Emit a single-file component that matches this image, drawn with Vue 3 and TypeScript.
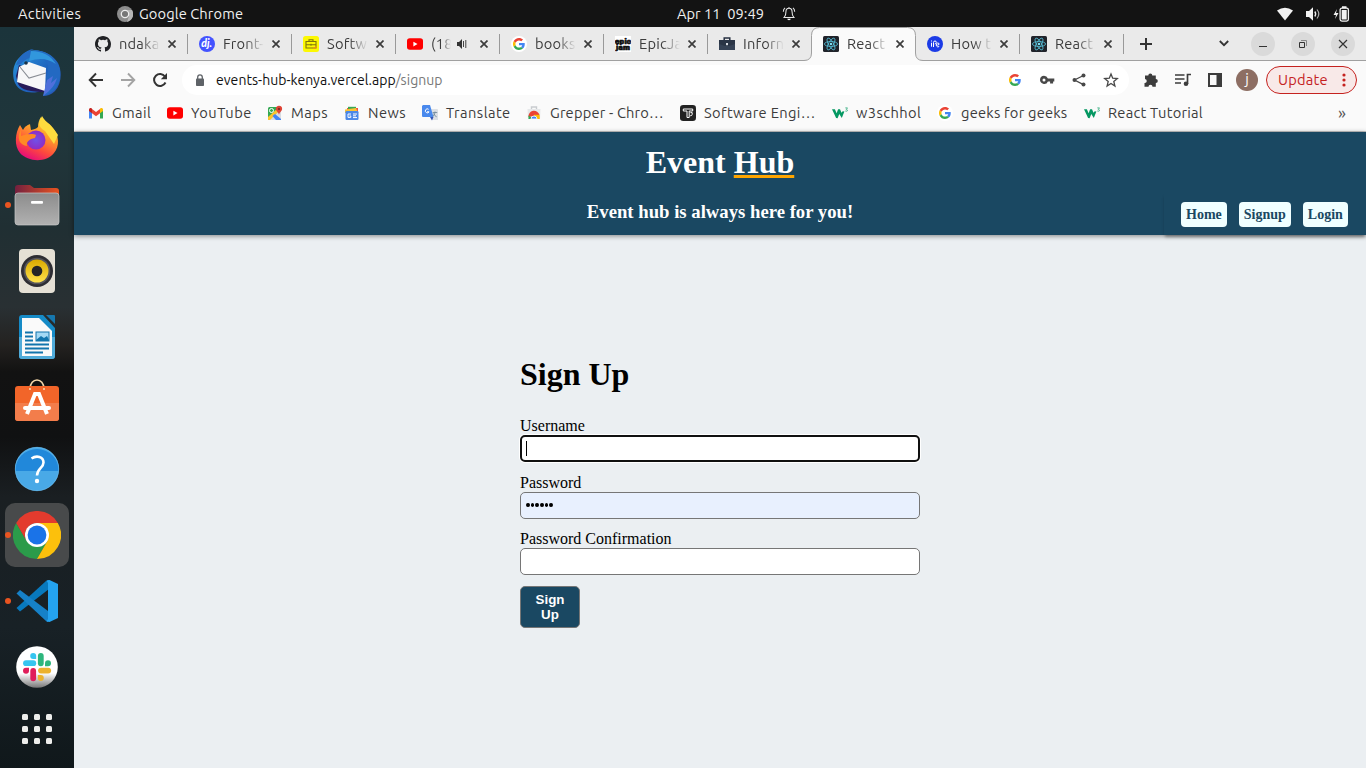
<script setup lang="ts">
interface Tab { icon: string; title: string; active?: boolean; audio?: boolean; sep?: boolean }
interface Bookmark { icon: string; label: string; width: number; spacing: number }

const tabs: Tab[] = [
  { icon: 'github', title: 'ndaka', sep: true },
  { icon: 'dj', title: 'Front-', sep: true },
  { icon: 'case-yellow', title: 'Softw', sep: true },
  { icon: 'youtube', title: '(18', audio: true, sep: true },
  { icon: 'google-round', title: 'books', sep: true },
  { icon: 'epic', title: 'EpicJa', sep: true },
  { icon: 'case-dark', title: 'Inforn' },
  { icon: 'react', title: 'React', active: true },
  { icon: 'howto', title: 'How t', sep: true },
  { icon: 'react', title: 'React', sep: true },
]

const bookmarks: Bookmark[] = [
  { icon: 'gmail', label: 'Gmail', width: 79, spacing: 0.36 },
  { icon: 'youtube', label: 'YouTube', width: 100, spacing: 0.45 },
  { icon: 'maps', label: 'Maps', width: 77, spacing: 0.5 },
  { icon: 'news', label: 'News', width: 78, spacing: 0.45 },
  { icon: 'translate', label: 'Translate', width: 104, spacing: 0.44 },
  { icon: 'store', label: 'Grepper - Chro…', width: 154, spacing: 0.18 },
  { icon: 'tk', label: 'Software Engi…', width: 152, spacing: 0.36 },
  { icon: 'w3', label: 'w3schhol', width: 105, spacing: 0.42 },
  { icon: 'google-round', label: 'geeks for geeks', width: 147, spacing: 0.22 },
  { icon: 'w3', label: 'React Tutorial', width: 130, spacing: 0.24 },
]

const dock = [
  { icon: 'thunderbird' }, { icon: 'firefox' }, { icon: 'files', running: true },
  { icon: 'rhythmbox' }, { icon: 'writer' }, { icon: 'software' }, { icon: 'help' },
  { icon: 'chrome', running: true, focused: true }, { icon: 'vscode', running: true }, { icon: 'slack' },
]
</script>

<template>
  <div class="desktop">
    <svg class="defs" width="0" height="0">
      <defs>
        <linearGradient id="tbBlue" x1="0" y1="0" x2="1" y2="1"><stop offset="0" stop-color="#2a9be0" /><stop offset=".55" stop-color="#1f63bd" /><stop offset="1" stop-color="#2b55b5" /></linearGradient>
        <linearGradient id="ffBody" x1=".8" y1="0" x2=".3" y2="1"><stop offset="0" stop-color="#fff14a" /><stop offset=".35" stop-color="#ffa52a" /><stop offset=".7" stop-color="#ff4a3c" /><stop offset="1" stop-color="#e3087e" /></linearGradient>
        <radialGradient id="ffCore"><stop offset="0" stop-color="#6f52e8" /><stop offset="1" stop-color="#8f2dc4" /></radialGradient>
        <linearGradient id="folderBack" x1="0" x2="1"><stop offset="0" stop-color="#73203f" /><stop offset="1" stop-color="#e95420" /></linearGradient>
        <linearGradient id="folderFront" x1="0" y1="0" x2="0" y2="1"><stop offset="0" stop-color="#8c8c8c" /><stop offset="1" stop-color="#b1b1b1" /></linearGradient>
        <linearGradient id="yellowCone" x1="0" y1="0" x2="0" y2="1"><stop offset="0" stop-color="#d9a900" /><stop offset="1" stop-color="#ffe14b" /></linearGradient>
        <linearGradient id="slackBg" x1="0" y1="0" x2="0" y2="1"><stop offset=".65" stop-color="#fff" /><stop offset="1" stop-color="#777" /></linearGradient>

        <symbol id="i-github" viewBox="0 0 16 16"><path fill="#202124" d="M8 0C3.58 0 0 3.58 0 8c0 3.54 2.29 6.53 5.47 7.59.4.07.55-.17.55-.38v-1.49c-2.01.37-2.53-.49-2.69-.94-.09-.23-.48-.94-.82-1.13-.28-.15-.68-.52-.01-.53.63-.01 1.08.58 1.23.82.72 1.21 1.87.87 2.33.66.07-.52.28-.87.51-1.07-1.78-.2-3.64-.89-3.64-3.95 0-.87.31-1.59.82-2.15-.08-.2-.36-1.02.08-2.12 0 0 .67-.21 2.2.82a7.6 7.6 0 0 1 4 0c1.53-1.04 2.2-.82 2.2-.82.44 1.1.16 1.92.08 2.12.51.56.82 1.27.82 2.15 0 3.07-1.87 3.75-3.65 3.95.29.25.54.73.54 1.48v2.2c0 .21.15.46.55.38A8 8 0 0 0 16 8c0-4.42-3.58-8-8-8z" /></symbol>
        <symbol id="i-dj" viewBox="0 0 16 16"><circle cx="8" cy="8" r="8" fill="#4353ff" /><text x="2.2" y="11.3" font-family="Lato" font-size="10.500" font-weight="900" font-style="italic" fill="#fff">dj.</text></symbol>
        <symbol id="i-case-yellow" viewBox="0 0 16 16"><rect width="16" height="16" rx="2.5" fill="#fcf803" /><path d="M3 5.5h10V12H3zM6 5.5V3.7h4v1.8M3 8.8h10M8 7.7v2" fill="none" stroke="#80740c" stroke-width="1.1" /><path d="M13 10v2h-3" stroke="#ff8b20" fill="none" /></symbol>
        <symbol id="i-youtube" viewBox="0 0 16 16"><rect y="2.3" width="16" height="11.5" rx="2.8" fill="#f00" /><path d="M6.4 5.7v4.7L10.5 8z" fill="#fff" /></symbol>
        <symbol id="i-google" viewBox="0 0 48 48"><path fill="#EA4335" d="M24 9.5c3.54 0 6.71 1.22 9.21 3.6l6.85-6.85C35.9 2.38 30.47 0 24 0 14.62 0 6.51 5.38 2.56 13.22l7.98 6.19C12.43 13.72 17.74 9.5 24 9.5z" /><path fill="#4285F4" d="M46.98 24.55c0-1.57-.15-3.09-.38-4.55H24v9.02h12.94c-.58 2.96-2.26 5.48-4.78 7.18l7.73 6c4.51-4.18 7.09-10.36 7.09-17.65z" /><path fill="#FBBC05" d="M10.53 28.59a14.5 14.5 0 0 1 0-9.18l-7.98-6.19a24 24 0 0 0 0 21.56z" /><path fill="#34A853" d="M24 48c6.48 0 11.93-2.13 15.89-5.81l-7.73-6c-2.15 1.45-4.92 2.3-8.16 2.3-6.26 0-11.57-4.22-13.47-9.91l-7.98 6.19C6.51 42.62 14.62 48 24 48z" /></symbol>
        <symbol id="i-google-round" viewBox="0 0 16 16"><circle cx="8" cy="8" r="8" fill="#fff" /><use href="#i-google" x="2" y="2" width="12" height="12" /></symbol>
        <symbol id="i-epic" viewBox="0 0 16 16"><rect width="16" height="16" fill="#fff" /><g font-family="Roboto" font-weight="900" font-size="8" fill="#111" stroke="#111" stroke-width=".7"><text x="0" y="7.500" textLength="16">epic</text><text x="1" y="13.500" textLength="14">jam</text></g></symbol>
        <symbol id="i-case-dark" viewBox="0 0 16 16"><path d="M5.2 4V2.1h5.6V4" fill="none" stroke="#273142" stroke-width="1.5" /><path d="M0 4h16v10H0z" fill="#354255" /><path d="M0 4h16v4L10 10H6L0 8z" fill="#2a3546" /><rect x="7" y="7" width="2" height="2.200" fill="#d7dce2" /></symbol>
        <symbol id="i-react" viewBox="0 0 16 16"><rect width="16" height="16" rx="1.5" fill="#20232a" /><g fill="none" stroke="#54b9d1" stroke-width=".85"><ellipse cx="8" cy="8" rx="6.6" ry="2.5" /><ellipse cx="8" cy="8" rx="6.6" ry="2.5" transform="rotate(60 8 8)" /><ellipse cx="8" cy="8" rx="6.6" ry="2.5" transform="rotate(120 8 8)" /></g><circle cx="8" cy="8" r="1.3" fill="#7bdcf0" /></symbol>
        <symbol id="i-howto" viewBox="0 0 16 16"><circle cx="8" cy="8" r="8" fill="#1b3be6" /><path d="M4.500 4.500v1M4.500 6.700v4M6.500 11V6.500Q6.500 5 8 5t1.300 1.400T7.800 8M9.300 10q-.4-3 1.400-3t1.300 1.500l-1.800.8M9.600 10.200q1 1.300 2.600.3" fill="none" stroke="#fff" stroke-width="1" /></symbol>
        <symbol id="i-gmail" viewBox="0 0 16 16"><path d="M1 4v9.5h3V7.2z" fill="#4285f4" /><path d="M12 7.2v6.3h3V4z" fill="#34a853" /><path d="M4 4v4.3l4 3 4-3V4L8 7z" fill="#ea4335" /><path d="M1 5c0-2 1.8-2.5 3-1.4v4.7L1 6z" fill="#c5221f" /><path d="M15 5c0-2-1.8-2.5-3-1.4v4.7L15 6z" fill="#fbbc04" /></symbol>
        <symbol id="i-maps" viewBox="0 0 16 16"><rect x="1" y="2" width="13" height="13" rx="1.5" fill="#34a853" /><path d="M2 15 14 4v11z" fill="#d8dce1" /><path d="M1 12 11 3l2 2L3 15H1z" fill="#fbc52d" /><path d="M8 9l6 5v1H9L5.5 11z" fill="#4285f4" /><circle cx="4.5" cy="5.5" r="2" fill="none" stroke="#fff" /><path d="M12 .7a3.2 3.2 0 0 1 3.1 3.5C15 6 12.5 7 12 9.7 11.5 7 9 6 8.8 4.2A3.2 3.2 0 0 1 12 .7z" fill="#df4335" /><circle cx="12" cy="4" r="1.1" fill="#75251c" /></symbol>
        <symbol id="i-news" viewBox="0 0 16 16"><path d="M3 3h11v7H3z" fill="#ef5143" /><path d="M4 1.8h8v8H4z" fill="#39a852" /><path d="M1 4.5 12 3l2 5H1z" fill="#fbc234" /><rect x="1.5" y="6" width="13" height="9" rx="1.2" fill="#4b88e8" /><path d="M7 9H4v3.4h2.8v-1.5H5.5M9 9h4M9 10.8h3M9 12.6h4" fill="none" stroke="#fff" stroke-width="1" /></symbol>
        <symbol id="i-translate" viewBox="0 0 16 16"><path d="M5 4h10a1 1 0 0 1 1 1v10H10z" fill="#dce0e5" /><path d="M1 0h7l3.5 12H1a1 1 0 0 1-1-1V1z" fill="#4989ed" /><path d="M8 12h3.5L10 15.5z" fill="#3454b4" /><path d="M6.6 4.3a2 2 0 1 0 .5 2.5H5" fill="none" stroke="#fff" /><path d="M10.7 7.5h4.5M13 6.5v1q-.4 3-2.5 4M11.5 8.5q1.5 3 3.2 3.3" fill="none" stroke="#688397" stroke-width=".8" /></symbol>
        <symbol id="i-store" viewBox="0 0 16 16"><path d="M5.5 4V2h5v2" fill="none" stroke="#c9cccf" stroke-width="1.4" /><path d="M1.5 4h13l-.5 10H2z" fill="#e6e8ea" /><path d="M2.500 12a5.600 5.600 0 0 1 11-2z" fill="#ea4335" /><path d="M2.500 14v-3.500L8 14z" fill="#34a853" /><path d="M8 9.800h5.700V14H8z" fill="#fbbc05" /><path d="M5 14a3 3 0 1 1 6 0z" fill="#4285f4" stroke="#fff" stroke-width=".8" /></symbol>
        <symbol id="i-tk" viewBox="0 0 16 16"><rect width="16" height="16" rx="3.2" fill="#222" /><path d="M3.3 6V4h9.4v2H9.2v6.5H7V6zM10.4 7.6h1.8v1.7q0 1.5-2 1.5" fill="none" stroke="#fff" stroke-width="1" /></symbol>
        <symbol id="i-w3" viewBox="0 0 16 16"><path d="M0 4.300h2.900l1.700 4 1.500-4h1.900l1.500 3.400 1.200-1.400 1.700.2-2.600 6.500L7.300 9l-1.700 4.200L4.100 13z" fill="#059862" /><path d="M13.300 2.900h2.200l-1.200 1.500q1.600.3 1 1.500-.8.700-2 .1" fill="none" stroke="#2aa878" stroke-width=".8" /></symbol>

        <symbol id="i-thunderbird" viewBox="0 0 48 48"><path d="M16 2C26-1 39 4 45 14c4 8 4 20-3 28-4 4-8 5-12 5 2-2 2-4 1-5C17 45 7 44 2 34-1 27-1 15 7 8c3-3 6-5 9-6z" fill="url(#tbBlue)" /><path d="M3 27 6 16 30 24l2 19C18 43 8 41 5 35z" fill="#281b59" /><path d="M4 33 6 18l10-5 17 6-1 23z" fill="#f7f7f8" /><path d="m7 18 9 11 17-5" fill="none" stroke="#898d94" stroke-width="1.1" /><path d="M8 15C16 5 32 7 35 16c1 8-3 12-1 15 0 6 0 9-4 16 14-4 18-14 17-26C45 8 30-1 17 2l4-2C12 1 6 7 3 16z" fill="#2369c2" /><path d="M18 2c12 0 20 5 25 13-9-6-17-6-27-3z" fill="#3197dd" /><path d="m34 31 6-4-2 7 6-5c-2 7-6 12-14 18z" fill="#4f70db" /><circle cx="13" cy="14" r="1.8" fill="#1b3348" /></symbol>
        <symbol id="i-firefox" viewBox="0 2 48 48"><path d="M28 4c2 4 8 5 12 11 6 8 7 18 1 25-8 10-26 9-34 0C1 33 2 20 7 12l3 5c2-4 5-5 7-6l1 6c3-1 5-1 7-3 0-4 1-7 3-10z" fill="url(#ffBody)" /><path d="M29 3c-3 7-5 10 3 15l9 13 4-9C40 13 33 10 29 3z" fill="#ffdc3e" /><circle cx="23" cy="27" r="9.5" fill="url(#ffCore)" /><path d="M8 23c5-2 12-3 15-1l-1 3c-6 1-9 4-8 8-7-1-9-6-8-12l2-4z" fill="#ff8a25" /></symbol>
        <symbol id="i-files" viewBox="0 0 48 48"><path d="M2 25V7q0-3 3-3h12l4 3h22q3 0 3 3v15z" fill="url(#folderBack)" /><rect x="2" y="12" width="44" height="32" rx="3" fill="url(#folderFront)" stroke="#c9c9c9" stroke-width=".7" /><rect x="18" y="20" width="12" height="2.8" rx="1" fill="#fff" /></symbol>
        <symbol id="i-rhythmbox" viewBox="0 0 48 48"><rect x="6" y="2" width="36" height="44" rx="4" fill="#e5e0d5" /><circle cx="24" cy="24" r="16" fill="#2e2d33" /><circle cx="24" cy="24" r="13.3" fill="#55545a" /><circle cx="24" cy="24" r="11.5" fill="url(#yellowCone)" /><circle cx="24" cy="24" r="5.3" fill="#252527" /></symbol>
        <symbol id="i-writer" viewBox="0 0 48 48"><path d="M9 2h21l12 13v28q0 3-3 3H9q-3 0-3-3V5q0-3 3-3z" fill="#168bc7" /><path d="M6 24h36v19q0 3-3 3H9q-3 0-3-3z" fill="#50abd9" /><path d="M9 5h17l13 13v25H9z" fill="#fafafa" /><path d="M33 2h8q1 0 1 1v8z" fill="#1677ae" /><path d="M12 19.500h8M12 23.500h8M12 27.500h8M12 31.500h24M12 35.500h24M12 39.500h18" stroke="#1275ad" stroke-width="2" /><rect x="23" y="19" width="13" height="9" fill="#a4d9f5" stroke="#1275ad" /><path d="m23 27 5-4 3 2 3-2 2 4v1H23z" fill="#1275ad" /></symbol>
        <symbol id="i-software" viewBox="0 3 48 48"><path d="M17 15v-2C17 1 31 1 31 13v2" fill="none" stroke="#f5d8aa" stroke-width="1.6" /><rect x="2" y="10" width="44" height="35" rx="3" fill="#f26529" /><path d="M2 27h44v15q0 3-3 3H5q-3 0-3-3z" fill="#f37d4b" /><path d="m14 38 8-20h4l8 20" fill="none" stroke="#fff" stroke-width="4" /><rect x="10" y="30" width="28" height="4" rx="2" fill="#fff" /><path d="M17 14v-2M31 14v-2" stroke="#f5d8aa" stroke-width="1.6" /></symbol>
        <symbol id="i-help" viewBox="0 0 48 48"><circle cx="24" cy="24" r="22" fill="#49a9e7" /><path d="M2 26a22 22 0 1 1 44 0z" fill="#2188da" /><circle cx="24" cy="24" r="21.7" fill="none" stroke="#6cbcec" stroke-width=".6" /><path d="M18.500 13.500c5-3.500 12-2 12 4 0 5.500-6.500 6-6.500 13" fill="none" stroke="#fff" stroke-width="2.600" /><circle cx="24" cy="36" r="2.200" fill="#fff" /></symbol>
        <symbol id="i-chrome" viewBox="0 0 48 48"><path d="M24 24 13.600 30 3.200 12A24 24 0 0 0 24 48l10.400-18z" fill="#2b9b4a" /><path d="M24 12h20.800A24 24 0 0 1 24 48l10.400-18z" fill="#fcc00c" /><path d="M3.200 12A24 24 0 0 1 44.800 12H24a12 12 0 0 0-10.400 18z" fill="#e33b2e" /><circle cx="24" cy="24" r="12" fill="#fff" /><circle cx="24" cy="24" r="9.400" fill="#1a73e8" /></symbol>
        <symbol id="i-vscode" viewBox="0 0 48 48"><path d="M3.500 31 7 34.500 36 12V3L33 4 3.500 31z" fill="#0879bd" /><path d="m7 13-3.500 3.500L33 44l2 1V34z" fill="#1681c8" /><path d="m33.500 3.500 3-.5L45 7v34l-8.500 4-3-.5L35 42V6z" fill="#24a3f0" /></symbol>
        <symbol id="i-slack" viewBox="0 0 48 48"><circle cx="24" cy="24" r="20.800" fill="url(#slackBg)" /><g stroke-width="5.800" stroke-linecap="round"><path d="M13 20.200h7.300" stroke="#36c5f0" /><path d="M27.800 13v7.300" stroke="#2eb67d" /><path d="M28 27.600h7.200" stroke="#ecb22e" /><path d="M20.200 28v7.300" stroke="#e01e5a" /></g><path d="M20.200 10a3 3 0 0 1 3 3v3h-3a3 3 0 0 1 0-6z" fill="#36c5f0" /><path d="M38 20.200a3 3 0 0 1-3 3h-3v-3a3 3 0 0 1 6 0z" fill="#2eb67d" /><path d="M27.800 38a3 3 0 0 1-3-3v-3h3a3 3 0 0 1 0 6z" fill="#ecb22e" /><path d="M10 27.700a3 3 0 0 1 3-3h3v3a3 3 0 0 1-6 0z" fill="#e01e5a" /></symbol>
      </defs>
    </svg>

    <header class="topbar">
      <span class="activities">Activities</span>
      <svg class="app-logo" viewBox="0 0 16 16"><circle cx="8" cy="8" r="8" fill="#8d8d8d" /><path d="M8 4h7a8 8 0 0 1-5 12l2-6z" fill="#b5b5b5" /><circle cx="8" cy="8" r="3.700" fill="#777" stroke="#eee" stroke-width="1.300" /></svg>
      <span class="app-name">Google Chrome</span>
      <span class="clock">Apr 11&nbsp; 09:49</span>
      <svg class="bell" viewBox="0 0 16 18"><path d="M2.500 13.500h11c-1.500-1.500-2-3-2-6.500 0-2.500-1.500-4-3.500-4S4.500 4.500 4.500 7c0 3.500-.5 5-2 6.500zM8 3V1.500M3.500 2.500Q1.500 4 1.500 7M12.500 2.500q2 1.500 2 4.500" fill="none" stroke="#e8e8e8" stroke-width="1.200" /><path d="M6 15h4a2 1.600 0 0 1-4 0z" fill="#fff" /></svg>
      <div class="status">
        <svg width="16" height="14" viewBox="0 0 16 14"><path d="M0 3.500Q8-2 16 3.500L8 13.500z" fill="#f2f2f2" /></svg>
        <svg width="16" height="16" viewBox="0 0 16 16"><path d="M1 5h3l4-3.800v13.600L4 11H1z" fill="#f2f2f2" /><path d="M9.800 5.500q1.800 2.500 0 5" fill="none" stroke="#f2f2f2" stroke-width="1.300" /><path d="M12 3.500q3.600 4.500 0 9" fill="none" stroke="#aaa" stroke-width="1.200" /></svg>
        <svg width="17" height="16" viewBox="0 0 17 16"><path d="M4 3 .5 9H3l-1 4 3.500-6H3z" fill="#f2f2f2" /><rect x="7.100" y="2.100" width="8.300" height="13" rx="1.800" fill="none" stroke="#f2f2f2" stroke-width="1.300" /><path d="M9 .3h4.500v2H9zM8.700 4h5v9.500h-5z" fill="#f2f2f2" /></svg>
      </div>
    </header>

    <div class="workspace">
      <aside class="dock">
        <div v-for="d in dock" :key="d.icon" class="tile" :class="{ focused: d.focused }">
          <svg width="48" height="48"><use :href="'#i-' + d.icon" /></svg>
          <i v-if="d.running" class="dot"></i>
        </div>
        <div class="apps"><i v-for="n in 9" :key="n"></i></div>
      </aside>

      <section class="browser">
        <div class="tabstrip">
          <div v-for="(t, i) in tabs" :key="i" class="tab" :class="{ active: t.active, sep: t.sep }">
            <svg v-if="t.active" class="shape" width="122" height="34" viewBox="0 0 122 34"><path d="M0 33.500h1q7.500 0 7.500-7.500V8.500Q8.500.5 16.500.5h88q8 0 8 8V26q0 7.500 7.500 7.500h2v.5H0z" fill="#fafafa" /><path d="M0 33.500h1q7.500 0 7.500-7.500V8.500Q8.500.5 16.500.5h88q8 0 8 8V26q0 7.500 7.500 7.500h2" fill="none" stroke="#a0a0a0" /></svg>
            <svg class="fav" width="16" height="16"><use :href="'#i-' + t.icon" /></svg>
            <span class="title" :class="{ short: t.audio }">{{ t.title }}</span>
            <svg v-if="t.audio" class="audio" width="11" height="10" viewBox="0 0 11 10"><path d="M0 3h2l3-3v10L2 7H0z" fill="#333" /><path d="M6.500 2v6M8.800 1v8" stroke="#444" /></svg>
            <svg class="close" width="8" height="8" viewBox="0 0 8 8"><path d="m.5.5 7 7m0-7-7 7" stroke="#3c3c3c" stroke-width="1.700" /></svg>
          </div>
          <svg class="plus" width="12" height="12" viewBox="0 0 12 12"><path d="M6 0v12M0 6h12" stroke="#333" stroke-width="2" /></svg>
          <svg class="chev" width="10" height="7" viewBox="0 0 10 7"><path d="m.8 1 4.200 4.200L9.200 1" fill="none" stroke="#333" stroke-width="1.800" /></svg>
          <div class="winctl">
            <span><svg width="10" height="10"><path d="M1 7.500h8" stroke="#333" /></svg></span>
            <span><svg width="10" height="10"><path d="M1.500 3.500h5v5h-5z" fill="none" stroke="#333" /><path d="M3 1.500h5.500V7" fill="none" stroke="#888" /></svg></span>
            <span><svg width="10" height="10"><path d="m1 1 8 8m0-8L1 9" stroke="#333" stroke-width="1.200" /></svg></span>
          </div>
        </div>

        <div class="toolbar">
          <div class="nav-icons">
            <svg viewBox="0 0 16 16"><path d="M15 8H2M8 1.500 1.700 8 8 14.500" fill="none" stroke="#333" stroke-width="1.900" /></svg>
            <svg viewBox="0 0 16 16"><path d="M1 8h13M8 1.500 14.300 8 8 14.500" fill="none" stroke="#a3a3a3" stroke-width="1.900" /></svg>
            <svg viewBox="0 0 16 16"><path d="M13.500 10.500A6 6 0 1 1 13 4.500" fill="none" stroke="#333" stroke-width="2" /><path d="M15 1v6.200H8.800z" fill="#333" /></svg>
          </div>
          <div class="omnibox">
            <svg class="lock" width="10" height="12" viewBox="0 0 10 12"><rect x="1" y="4.500" width="8" height="7.500" rx=".8" fill="#5f6368" /><path d="M2.700 5V3.200a2.300 2.300 0 0 1 4.600 0V5" fill="none" stroke="#5f6368" stroke-width="1.300" /></svg>
            <span class="url">events-hub-kenya.vercel.app<em>/signup</em></span>
            <div class="omni-icons">
              <svg viewBox="-2 -2 16 16"><use href="#i-google" width="12" height="12" /></svg>
              <svg viewBox="0 0 16 16"><path fill-rule="evenodd" d="M5 3.700a4.200 4.200 0 0 1 3.900 2.700h6.400v3h-1.200v2.100h-3V9.400H8.900A4.100 4.100 0 1 1 5 3.700zm0 2.700a1.500 1.500 0 1 0 0 3 1.500 1.500 0 0 0 0-3z" fill="#484848" /></svg>
              <svg viewBox="0 0 16 16"><path d="m12.500 3.500-9 4.500 9 4.700" fill="none" stroke="#484848" stroke-width="1.300" /><g fill="#484848"><circle cx="12.500" cy="3.500" r="2" /><circle cx="3.500" cy="8" r="2" /><circle cx="12.500" cy="12.600" r="2" /></g></svg>
              <svg viewBox="0 0 16 16"><path d="m8 1.900 1.700 4.300 4.600.3-3.500 3 1.100 4.500L8 11.500 4.100 14l1.100-4.500-3.500-3 4.600-.3z" fill="none" stroke="#484848" stroke-width="1.300" /></svg>
            </div>
          </div>
          <div class="ext-icons">
            <svg viewBox="0 0 16 16"><path d="M2 3.500h3.300a2 2 0 1 1 4 0h3.500V7a2 2 0 1 1 0 4v3.700H9.500a2 2 0 0 0-4 0H1.500V11a2 2 0 0 0 .5-4z" fill="#3c3c3c" /></svg>
            <svg viewBox="0 0 16 16"><path d="M0 3h9.500M0 7h9.500M0 11h6M12.500 12V2.500H16" fill="none" stroke="#3c3c3c" stroke-width="1.700" /><circle cx="11" cy="11.800" r="2.300" fill="#3c3c3c" /></svg>
            <svg viewBox="0 0 16 16"><path d="M1 1h14v14H1zM3 3v10h6.500V3z" fill-rule="evenodd" fill="#3c3c3c" /></svg>
          </div>
          <span class="avatar">j</span>
          <div class="update">Update<svg width="4" height="14"><g fill="#c5221f"><circle cx="2" cy="2" r="1.600" /><circle cx="2" cy="7" r="1.600" /><circle cx="2" cy="12" r="1.600" /></g></svg></div>
        </div>

        <div class="bookmarks">
          <div v-for="b in bookmarks" :key="b.label" class="bm" :style="{ width: b.width + 'px', letterSpacing: b.spacing + 'px' }">
            <svg width="16" height="16"><use :href="'#i-' + b.icon" /></svg><span>{{ b.label }}</span>
          </div>
          <span class="more">»</span>
        </div>

        <main class="page">
          <div class="hero">
            <h1>Event <span>Hub</span></h1>
            <h3>Event hub is always here for you!</h3>
            <nav><a>Home</a><a>Signup</a><a>Login</a></nav>
          </div>
          <form class="signup" @submit.prevent>
            <h1>Sign Up</h1>
            <label>Username</label>
            <div class="field focus"><i class="caret"></i></div>
            <label>Password</label>
            <div class="field filled"><b v-for="n in 6" :key="n"></b></div>
            <label>Password Confirmation</label>
            <div class="field last"></div>
            <button type="submit">Sign Up</button>
          </form>
        </main>
      </section>
    </div>
  </div>
</template>

<style>
html, body { margin: 0; overflow: hidden; }
</style>

<style scoped>
* { box-sizing: border-box; }
svg { display: block; flex: none; }
.desktop { width: 1366px; height: 768px; overflow: hidden; font-family: Ubuntu, "Noto Sans", sans-serif; font-size: 14.67px; display: flex; flex-direction: column; }
.defs { position: absolute; }
.topbar { height: 27px; flex: none; background: #131313; color: #f0f0f0; display: flex; align-items: center; padding-left: 18px; }
.topbar span { white-space: nowrap; line-height: 26px; }
.activities { width: 99px; letter-spacing: .3px; }
.app-logo { width: 16px; height: 16px; margin-right: 6px; }
.app-name { width: 538px; letter-spacing: .1px; }
.clock { width: 105px; }
.bell { width: 14px; height: 17px; }
.status { margin-left: auto; display: flex; gap: 12px; align-items: center; padding-right: 16px; }

.workspace { display: flex; height: 741px; }
.dock { width: 74px; flex: none; padding-top: 14px; display: flex; flex-direction: column; align-items: center; gap: 2px; background: linear-gradient(#1b343b 0, #20363b 120px, #202f33 200px, #293033 280px, #242220 318px, #121212 345px, #101112 410px, #1a1f22 470px, #182126 600px, #10181b 741px); }
.tile { width: 64px; height: 64px; border-radius: 10px; display: flex; align-items: center; justify-content: center; position: relative; }
.tile.focused { background: #484a4b; }
.dot { position: absolute; left: 0; top: 29px; width: 6px; height: 6px; border-radius: 50%; background: #e95420; }
.apps { height: 56px; display: grid; grid-template-columns: repeat(3, 6px); grid-auto-rows: 6px; gap: 6px; align-content: center; }
.apps i { background: #eeeeec; border-radius: 1.5px; }

.browser { width: 1292px; display: flex; flex-direction: column; background: #fafafa; }
.tabstrip { height: 34px; flex: none; background: #eaeaea; border-bottom: 1px solid #a0a0a0; display: flex; align-items: center; padding-left: 10px; }
.tab { width: 104px; height: 34px; flex: none; padding-left: 11px; display: flex; align-items: center; position: relative; }
.tab.sep::after { content: ""; position: absolute; right: 0; top: 7px; width: 1px; height: 20px; background: #999; }
.shape { position: absolute; left: -9px; top: 0; }
.fav { position: relative; margin-right: 8px; }
.title { position: relative; width: 41px; white-space: nowrap; color: #3c3c3c; letter-spacing: .2px; line-height: 34px; mask-image: linear-gradient(90deg, #000 55%, transparent 100%); }
.title.short { width: 20px; }
.close { position: relative; margin-left: 8px; }
.audio { margin-left: 6px; }
.audio + .close { margin-left: 12px; }
.plus { margin-left: 16px; }
.chev { margin-left: 67px; }
.winctl { display: flex; gap: 16px; margin-left: 22px; }
.winctl span { width: 24px; height: 24px; border-radius: 50%; background: #dadada; display: flex; align-items: center; justify-content: center; }

.toolbar { height: 37px; flex: none; display: flex; align-items: center; padding-left: 14px; }
.nav-icons { display: flex; gap: 16px; }
.nav-icons svg, .omni-icons svg, .ext-icons svg { width: 16px; height: 16px; }
.omnibox { width: 947px; height: 30px; margin: 0 14px; border-radius: 15px; background: #fff; display: flex; align-items: center; padding: 0 10px 0 13px; }
.url { margin-left: 11px; color: #111; font-size: 14px; letter-spacing: .04px; white-space: nowrap; }
.url em { font-style: normal; color: #777; }
.omni-icons { margin-left: auto; display: flex; gap: 16px; }
.ext-icons { display: flex; gap: 16px; margin-right: 13px; }
.avatar { width: 22px; height: 22px; border-radius: 50%; background: #8d6e63; color: #fff; text-align: center; line-height: 20px; }
.update { width: 91px; height: 28px; margin-left: 8px; border: 1px solid #c5221f; border-radius: 14px; background: #f8e9e8; color: #c5221f; display: flex; align-items: center; justify-content: space-between; padding: 0 10px 0 11px; letter-spacing: .2px; }

.bookmarks { height: 34px; flex: none; display: flex; align-items: center; padding-left: 14px; border-bottom: 1px solid #c5c5c5; color: #3c3c3c; padding-bottom: 3px; }
.bm { flex: none; display: flex; align-items: center; gap: 8px; white-space: nowrap; line-height: 20px; }
.more { margin-left: 124px; color: #555; font-size: 17px; line-height: 20px; }

.page { flex: 1; background: #ebeff2; font-family: "Liberation Serif", "Times New Roman", serif; }
.hero { height: 103px; background: #1a4862; color: #fff; text-align: center; position: relative; box-shadow: 0 1px 5px rgba(0, 0, 0, .45); padding-top: 12px; }
.hero h1 { margin: 0; font-size: 32px; line-height: 37px; }
.hero h1 span { text-decoration: underline; text-decoration-color: #ffa500; text-decoration-thickness: 3px; text-decoration-skip-ink: none; }
.hero h3 { margin: 20px 0 0; font-size: 18.72px; line-height: 22px; }
.hero nav { position: absolute; right: 0; bottom: 0; width: 202px; height: 42px; padding: 9px 0 0 17px; display: flex; align-items: flex-start; gap: 12px; box-shadow: 0 3px 3px -1px rgba(0, 0, 0, .35); }
.hero a { height: 25px; padding: 0 5px; border-radius: 4px; background: azure; color: #1a4862; font-weight: bold; font-size: 14px; line-height: 25px; }
.signup { width: 400px; margin: 121px auto 0; display: flex; flex-direction: column; color: #000; }
.signup h1 { font-size: 32px; line-height: 37px; margin: 0 0 24px; }
.signup label { font-size: 16px; line-height: 18px; }
.field { height: 27px; margin-bottom: 12px; border: 1px solid #767676; border-radius: 5px; background: #fff; display: flex; align-items: center; padding-left: 5px; }
.field.focus { border: 2px solid #101010; padding-left: 4px; box-shadow: 0 0 0 1px #fff; }
.field.filled { background: #e8f0fe; gap: 1px; margin-bottom: 11px; padding-bottom: 1px; }
.field.last { margin-bottom: 11px; }
.field b { width: 3.7px; height: 4px; border-radius: 50%; background: #000; }
.caret { width: 1px; height: 15px; background: #000; }
.signup button { width: 60px; height: 42px; padding: 1px 6px; border: 1px solid #767676; border-radius: 5px; background: #1a4862; color: #fff; font: bold 13.333px/15px "Liberation Sans", Arial, sans-serif; }
</style>
